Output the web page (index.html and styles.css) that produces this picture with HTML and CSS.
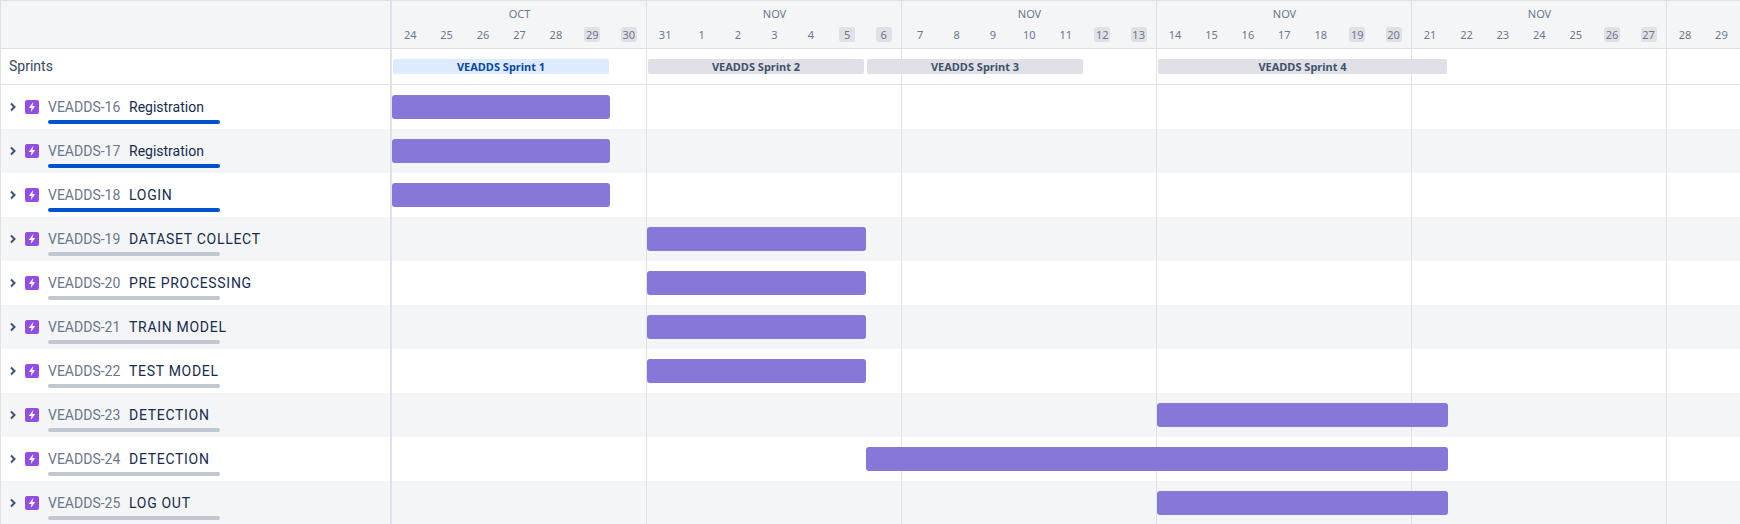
FILE: index.html
```html
<!DOCTYPE html>
<html lang="en">
<head>
<meta charset="utf-8">
<title>Roadmap</title>
<link rel="stylesheet" href="styles.css">
</head>
<body>
<div class="gantt">
  <div class="row head">
    <div class="side"></div>
    <div class="time lines">
      <div class="months"><span>OCT</span><span>NOV</span><span>NOV</span><span>NOV</span><span>NOV</span></div>
      <div class="days">
        <span>24</span><span>25</span><span>26</span><span>27</span><span>28</span><span><b>29</b></span><span><b>30</b></span>
        <span>31</span><span>1</span><span>2</span><span>3</span><span>4</span><span><b>5</b></span><span><b>6</b></span>
        <span>7</span><span>8</span><span>9</span><span>10</span><span>11</span><span><b>12</b></span><span><b>13</b></span>
        <span>14</span><span>15</span><span>16</span><span>17</span><span>18</span><span><b>19</b></span><span><b>20</b></span>
        <span>21</span><span>22</span><span>23</span><span>24</span><span>25</span><span><b>26</b></span><span><b>27</b></span>
        <span>28</span><span>29</span>
      </div>
    </div>
  </div>
  <div class="row sprints">
    <div class="side sprints-label">Sprints</div>
    <div class="time lines sprint-track">
      <div class="sprint active" style="margin-left:1px;width:216px">VEADDS Sprint 1</div>
      <div class="sprint" style="margin-left:39px;width:216px">VEADDS Sprint 2</div>
      <div class="sprint" style="margin-left:3px;width:216px">VEADDS Sprint 3</div>
      <div class="sprint" style="margin-left:75px;width:289px">VEADDS Sprint 4</div>
    </div>
  </div>

  <div class="row issue">
    <div class="side issue-cell">
      <svg class="chev" viewBox="0 0 8 10"><path d="M2 1.5 5.500 5 2 8.500"/></svg>
      <svg class="epic" viewBox="0 0 14 14"><rect width="14" height="14" rx="2"/><path d="M8.200 2 3.800 8h2.700l-.7 4 4.400-6H7.500z"/></svg>
      <div class="info"><div class="line"><span class="key">VEADDS-16</span><span class="name">Registration</span></div><div class="progress done"></div></div>
    </div>
    <div class="time lines"><div class="bar" style="margin-left:0;width:218px"></div></div>
  </div>
  <div class="row issue alt">
    <div class="side issue-cell">
      <svg class="chev" viewBox="0 0 8 10"><path d="M2 1.5 5.500 5 2 8.500"/></svg>
      <svg class="epic" viewBox="0 0 14 14"><rect width="14" height="14" rx="2"/><path d="M8.200 2 3.800 8h2.700l-.7 4 4.400-6H7.500z"/></svg>
      <div class="info"><div class="line"><span class="key">VEADDS-17</span><span class="name">Registration</span></div><div class="progress done"></div></div>
    </div>
    <div class="time lines"><div class="bar" style="margin-left:0;width:218px"></div></div>
  </div>
  <div class="row issue">
    <div class="side issue-cell">
      <svg class="chev" viewBox="0 0 8 10"><path d="M2 1.5 5.500 5 2 8.500"/></svg>
      <svg class="epic" viewBox="0 0 14 14"><rect width="14" height="14" rx="2"/><path d="M8.200 2 3.800 8h2.700l-.7 4 4.400-6H7.500z"/></svg>
      <div class="info"><div class="line"><span class="key">VEADDS-18</span><span class="name caps">LOGIN</span></div><div class="progress done"></div></div>
    </div>
    <div class="time lines"><div class="bar" style="margin-left:0;width:218px"></div></div>
  </div>
  <div class="row issue alt">
    <div class="side issue-cell">
      <svg class="chev" viewBox="0 0 8 10"><path d="M2 1.5 5.500 5 2 8.500"/></svg>
      <svg class="epic" viewBox="0 0 14 14"><rect width="14" height="14" rx="2"/><path d="M8.200 2 3.800 8h2.700l-.7 4 4.400-6H7.500z"/></svg>
      <div class="info"><div class="line"><span class="key">VEADDS-19</span><span class="name caps">DATASET COLLECT</span></div><div class="progress"></div></div>
    </div>
    <div class="time lines"><div class="bar" style="margin-left:255px;width:219px"></div></div>
  </div>
  <div class="row issue">
    <div class="side issue-cell">
      <svg class="chev" viewBox="0 0 8 10"><path d="M2 1.5 5.500 5 2 8.500"/></svg>
      <svg class="epic" viewBox="0 0 14 14"><rect width="14" height="14" rx="2"/><path d="M8.200 2 3.800 8h2.700l-.7 4 4.400-6H7.500z"/></svg>
      <div class="info"><div class="line"><span class="key">VEADDS-20</span><span class="name caps">PRE PROCESSING</span></div><div class="progress"></div></div>
    </div>
    <div class="time lines"><div class="bar" style="margin-left:255px;width:219px"></div></div>
  </div>
  <div class="row issue alt">
    <div class="side issue-cell">
      <svg class="chev" viewBox="0 0 8 10"><path d="M2 1.5 5.500 5 2 8.500"/></svg>
      <svg class="epic" viewBox="0 0 14 14"><rect width="14" height="14" rx="2"/><path d="M8.200 2 3.800 8h2.700l-.7 4 4.400-6H7.500z"/></svg>
      <div class="info"><div class="line"><span class="key">VEADDS-21</span><span class="name caps">TRAIN MODEL</span></div><div class="progress"></div></div>
    </div>
    <div class="time lines"><div class="bar" style="margin-left:255px;width:219px"></div></div>
  </div>
  <div class="row issue">
    <div class="side issue-cell">
      <svg class="chev" viewBox="0 0 8 10"><path d="M2 1.5 5.500 5 2 8.500"/></svg>
      <svg class="epic" viewBox="0 0 14 14"><rect width="14" height="14" rx="2"/><path d="M8.200 2 3.800 8h2.700l-.7 4 4.400-6H7.500z"/></svg>
      <div class="info"><div class="line"><span class="key">VEADDS-22</span><span class="name caps">TEST MODEL</span></div><div class="progress"></div></div>
    </div>
    <div class="time lines"><div class="bar" style="margin-left:255px;width:219px"></div></div>
  </div>
  <div class="row issue alt">
    <div class="side issue-cell">
      <svg class="chev" viewBox="0 0 8 10"><path d="M2 1.5 5.500 5 2 8.500"/></svg>
      <svg class="epic" viewBox="0 0 14 14"><rect width="14" height="14" rx="2"/><path d="M8.200 2 3.800 8h2.700l-.7 4 4.400-6H7.500z"/></svg>
      <div class="info"><div class="line"><span class="key">VEADDS-23</span><span class="name caps">DETECTION</span></div><div class="progress"></div></div>
    </div>
    <div class="time lines"><div class="bar" style="margin-left:765px;width:291px"></div></div>
  </div>
  <div class="row issue">
    <div class="side issue-cell">
      <svg class="chev" viewBox="0 0 8 10"><path d="M2 1.5 5.500 5 2 8.500"/></svg>
      <svg class="epic" viewBox="0 0 14 14"><rect width="14" height="14" rx="2"/><path d="M8.200 2 3.800 8h2.700l-.7 4 4.400-6H7.500z"/></svg>
      <div class="info"><div class="line"><span class="key">VEADDS-24</span><span class="name caps">DETECTION</span></div><div class="progress"></div></div>
    </div>
    <div class="time lines"><div class="bar" style="margin-left:474px;width:582px"></div></div>
  </div>
  <div class="row issue alt">
    <div class="side issue-cell">
      <svg class="chev" viewBox="0 0 8 10"><path d="M2 1.5 5.500 5 2 8.500"/></svg>
      <svg class="epic" viewBox="0 0 14 14"><rect width="14" height="14" rx="2"/><path d="M8.200 2 3.800 8h2.700l-.7 4 4.400-6H7.500z"/></svg>
      <div class="info"><div class="line"><span class="key">VEADDS-25</span><span class="name caps">LOG OUT</span></div><div class="progress"></div></div>
    </div>
    <div class="time lines"><div class="bar" style="margin-left:765px;width:291px"></div></div>
  </div>
</div>
</body>
</html>
```
FILE: styles.css
```css
* { box-sizing: border-box; }
html, body { margin: 0; padding: 0; background: #fff; }
body { width: 1740px; height: 524px; overflow: hidden; font-family: "Noto Sans", Roboto, sans-serif; color: #172b4d; }

.gantt { display: flex; flex-direction: column; border-left: 1px solid #dfe1e6; border-top: 1px solid #dfe1e6; }
.row { display: grid; grid-template-columns: 389px 1fr 0; flex: none; }
.side { border-right: 2px solid #dfe1e6; margin-right: -2px; width: 391px; min-width: 0; }
.time { margin-left: 2px; width: 1348px; overflow: hidden; }
.lines { background-image: linear-gradient(to right, #dfe1e6 1px, transparent 1px); background-size: 255px 100%; background-position: -1px 0; background-repeat: repeat-x; }

.head { height: 48px; background: #f4f5f7; border-bottom: 1px solid #dfe1e6; }
.months { display: grid; grid-template-columns: repeat(5, 255px); height: 26px; padding-top: 6px; font-size: 11px; line-height: 13px; color: #6b778c; text-align: center; }
.days { display: grid; grid-template-columns: repeat(37, 36.43px); font-size: 11px; line-height: 15px; color: #6b778c; text-align: center; width: 1400px; }
.days b { display: inline-block; min-width: 16px; height: 15px; border-radius: 3px; background: #dfe1e6; font-weight: 400; }

.sprints { height: 36px; border-bottom: 1px solid #dfe1e6; }
.sprints-label { display: flex; align-items: center; padding: 0 0 1px 8px; font-family: Roboto, sans-serif; font-size: 14px; color: #344563; }
.sprint-track { display: flex; padding-top: 10px; }
.sprint { flex: none; height: 15px; border-radius: 2px; background: #dfe1e6; color: #42526e; font-size: 11px; font-weight: 700; line-height: 15px; text-align: center; }
.sprint.active { background: #deebff; color: #0747a6; }

.issue { height: 44px; }
.alt { background-color: #f4f5f7; }
.issue-cell { display: flex; align-items: flex-start; padding-left: 8px; }
.chev { flex: none; width: 8px; height: 10px; margin-top: 17px; fill: none; stroke: #42526e; stroke-width: 2; }
.epic { flex: none; width: 14px; height: 14px; margin: 15px 0 0 8px; }
.epic rect { fill: #904ee2; }
.epic path { fill: #fff; }
.info { margin-left: 9px; width: 172px; }
.line { display: flex; height: 35px; padding-top: 13px; font-family: Roboto, sans-serif; font-size: 14px; line-height: 18px; white-space: nowrap; }
.key { flex: none; width: 81px; color: #6b778c; }
.name { color: #172b4d; }
.caps { letter-spacing: .7px; }
.progress { height: 4px; border-radius: 2px; background: #c1c7d0; }
.progress.done { background: #0052cc; }
.bar { height: 24px; margin-top: 10px; border-radius: 3px; background: #8777d9; }
```
